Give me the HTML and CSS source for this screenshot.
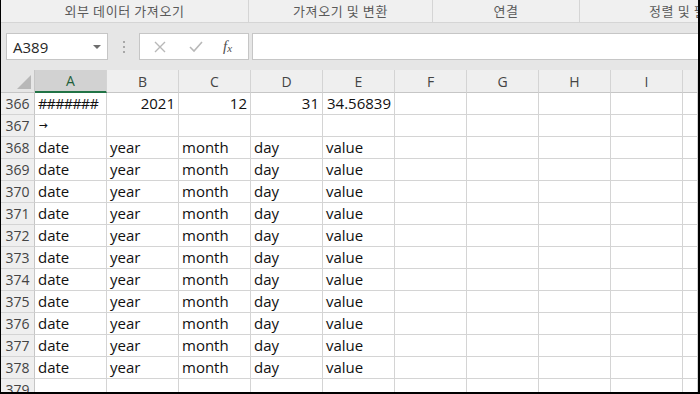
FILE: index.html
```html
<!DOCTYPE html>
<html>
<head>
    <meta charset="utf-8">
    <title> 시트 </title>
    <link rel="stylesheet" href="styles.css">
</head>
<body>
<div class="frame">

    <!-- ribbon group labels -->
    <div class="ribbon">
        <div class="group g1">외부 데이터 가져오기</div>
        <div class="group g2">가져오기 및 변환</div>
        <div class="group g3">연결</div>
        <div class="group g4">정렬 및 필</div>
    </div>

    <!-- formula bar -->
    <div class="formula-bar">
        <div class="name-box">
            <span>A389</span>
            <span class="drop"></span>
        </div>
        <div class="dots"><i></i><i></i><i></i></div>
        <div class="fx-box">
            <svg class="btn" width="14" height="14" viewBox="0 0 14 14"><path d="M2 2 L12 12 M12 2 L2 12" stroke="#b8b8b8" stroke-width="1.4" fill="none"/></svg>
            <svg class="btn" width="16" height="14" viewBox="0 0 16 14"><path d="M2 7 L6 11 L14 2" stroke="#b8b8b8" stroke-width="1.6" fill="none"/></svg>
            <span class="fx">f<sub>x</sub></span>
        </div>
        <div class="formula-input"></div>
    </div>

    <!-- sheet -->
    <div class="sheet" id="sheet">
        <div class="corner"><span class="tri"></span></div>
        <div class="col-head sel">A</div>
        <div class="col-head">B</div>
        <div class="col-head">C</div>
        <div class="col-head">D</div>
        <div class="col-head">E</div>
        <div class="col-head">F</div>
        <div class="col-head">G</div>
        <div class="col-head">H</div>
        <div class="col-head">I</div>
        <div class="col-head"></div>
    </div>

</div>

<script>
    var SHEET = document.getElementById( "sheet" )

    var ROWS = [
        [ 366, [ "#######", "2021", "12", "31", "34.56839" ], [ "hash", "r", "r", "r", "r" ] ],
        [ 367, [ "→" ], [ "arrow" ] ]
    ]

    for ( var n = 368; n <= 378; n++ ) {
        ROWS.push( [ n, [ "date", "year", "month", "day", "value" ], [] ] )
    }
    ROWS.push( [ 379, [], [] ] )

    ROWS.forEach( function( row ) {
        var head = document.createElement( "div" )
        head.className = "row-head"
        head.textContent = row[0]
        SHEET.appendChild( head )

        for ( var c = 0; c < 10; c++ ) {
            var cell = document.createElement( "div" )
            cell.className = "cell " + ( row[2][c] || "l" )
            cell.textContent = row[1][c] || ""
            SHEET.appendChild( cell )
        }
    });
</script>
</body>
</html>
```

FILE: styles.css
```css
* {
    box-sizing: border-box;
}

:root {
    --grid:      #d4d4d4;
    --head-bg:   #efefef;
    --panel:     #e6e6e6;
    --label:     #5a5a5a;
    --green:     #217346;
}

body {
    margin: 0;
    width: 700px;
    height: 394px;
    overflow: hidden;
    background: #ffffff;
    font-family: "Open Sans", "Noto Sans CJK KR", sans-serif;
}

.frame {
    width: 700px;
    height: 394px;
    overflow: hidden;

    border-left: 1px solid #000;
    border-right: 2px solid #000;
    border-bottom: 2px solid #000;

    display: flex;
    flex-direction: column;
}

/* ribbon group labels */
.ribbon {
    display: flex;
    height: 23px;
    flex-shrink: 0;

    background: #f0f0f0;
    border-bottom: 1px solid #d5d5d5;
}

.group {
    height: 22px;
    line-height: 21px;
    text-align: center;
    white-space: nowrap;
    overflow: hidden;

    font-family: "Noto Sans CJK KR", sans-serif;
    font-size: 13px;
    letter-spacing: 0.6px;
    color: var( --label );
}

.g1 { width: 248px; border-right: 1px solid #d5d5d5; }
.g2 { width: 184px; border-right: 1px solid #d5d5d5; }
.g3 { width: 147px; border-right: 1px solid #d5d5d5; }
.g4 { flex: 1; text-align: left; padding-left: 69px; }

/* formula bar */
.formula-bar {
    display: flex;
    align-items: center;
    height: 47px;
    flex-shrink: 0;

    padding: 10px 0 10px 5px;
    background: var( --panel );
}

.name-box,
.fx-box,
.formula-input {
    height: 27px;
    background: #ffffff;
    border: 1px solid #c6c6c6;
}

.name-box {
    width: 102px;
    display: flex;
    align-items: center;
    justify-content: space-between;
    padding: 0 6px 0 6px;

    font-size: 15px;
    color: #262626;
}

.drop {
    width: 0;
    height: 0;
    border-left: 4px solid transparent;
    border-right: 4px solid transparent;
    border-top: 4px solid #6d6d6d;
}

.dots {
    width: 31px;
    display: flex;
    flex-direction: column;
    align-items: center;
    gap: 3px;
}

.dots i {
    width: 2px;
    height: 2px;
    background: #a8a8a8;
}

.fx-box {
    width: 110px;
    display: flex;
    align-items: center;
    padding-left: 13px;
    gap: 21px;
}

.fx {
    font-family: "Liberation Serif", serif;
    font-style: italic;
    font-size: 15px;
    color: #505050;
    margin-left: -2px;
}

.fx sub {
    font-size: 11px;
    vertical-align: -1px;
}

.formula-input {
    flex: 1;
    margin-left: 3px;
    border-right: none;
}

/* sheet grid */
.sheet {
    display: grid;
    grid-template-columns: 34px repeat(9, 72px) 1fr;
    grid-auto-rows: 22px;
    grid-template-rows: 23px;
}

.corner {
    position: relative;
    background: var( --panel );
    border-right: 1px solid #c6c6c6;
    border-bottom: 1px solid #c6c6c6;
}

.tri {
    position: absolute;
    right: 3px;
    bottom: 3px;
    width: 0;
    height: 0;
    border-left: 14px solid transparent;
    border-bottom: 14px solid #b8b8b8;
}

.col-head {
    display: flex;
    align-items: center;
    justify-content: center;

    background: var( --head-bg );
    border-right: 1px solid var( --grid );
    border-bottom: 1px solid #c6c6c6;

    font-size: 14px;
    color: #444444;
}

.col-head.sel {
    background: #d2d2d2;
    border-bottom: 2px solid var( --green );
    color: #1f5f3b;
}

.row-head {
    display: flex;
    align-items: center;
    justify-content: center;

    background: var( --head-bg );
    border-right: 1px solid #c6c6c6;
    border-bottom: 1px solid var( --grid );

    font-size: 14px;
    color: #444444;
}

.cell {
    display: flex;
    align-items: center;
    padding: 0 3px 1px 3px;
    white-space: nowrap;
    overflow: hidden;

    border-right: 1px solid var( --grid );
    border-bottom: 1px solid var( --grid );

    font-size: 15px;
    color: #111111;
}

.cell.r {
    justify-content: flex-end;
}

.cell.hash {
    letter-spacing: -0.8px;
    font-size: 14.5px;
}

.cell.arrow {
    font-size: 9px;
    font-weight: bold;
    padding-left: 4px;
}
```
